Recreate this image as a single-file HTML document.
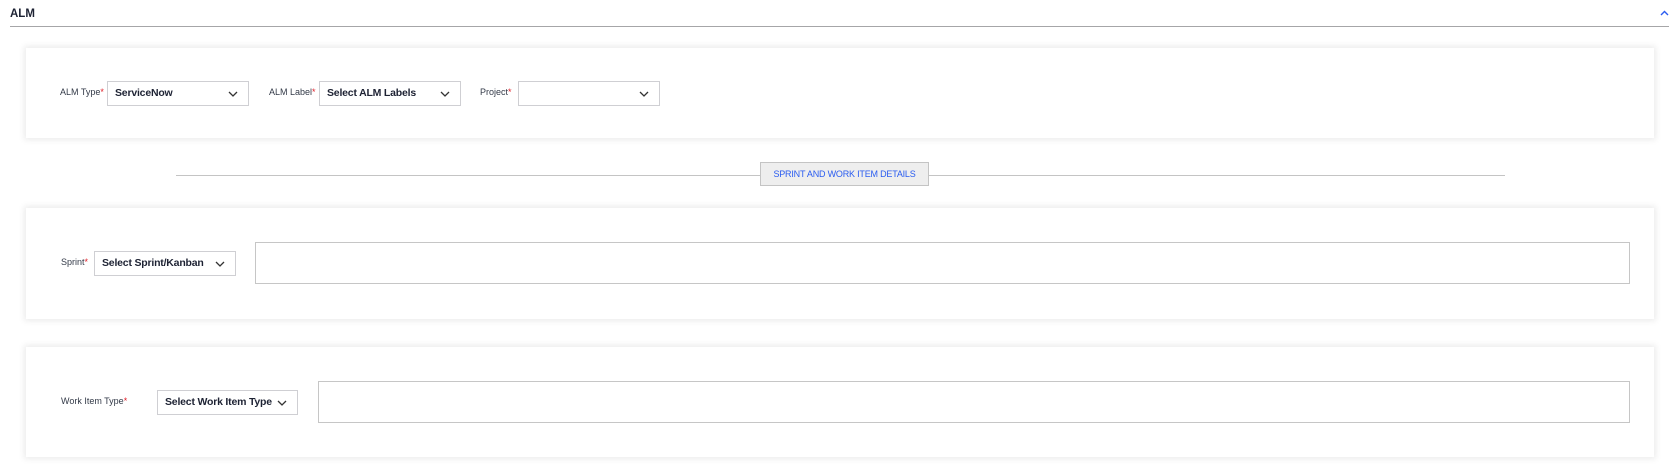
<!DOCTYPE html>
<html><head><style>
body{margin:0;width:1669px;height:465px;background:#fff;font-family:"Liberation Sans",sans-serif;position:relative;overflow:hidden;color:#1d2233}
.a{position:absolute}
.card{position:absolute;left:26px;width:1628px;background:#fff;box-shadow:0 0 6px 2px rgba(0,0,0,0.08)}
.lbl{position:absolute;font-size:9px;color:#333a48;white-space:nowrap}
.lbl b{color:#e0202a;font-weight:normal}
.sel{position:absolute;border:1px solid #cfcfd3;box-sizing:border-box;height:25px;font-size:10.5px;letter-spacing:-0.2px;font-weight:bold;line-height:23px;padding-left:7px;color:#1d2233;white-space:nowrap}
.sel svg{position:absolute;right:10px;top:9px}
.box{position:absolute;border:1px solid #c6c6c6;box-sizing:border-box}
</style></head><body>
<div class="a" style="left:10px;top:8px;font-size:11.5px;font-weight:bold">ALM</div>
<svg class="a" style="left:1660px;top:10px" width="9" height="6"><path d="M1 5L4.5 1.5L8 5" fill="none" stroke="#2b5cf0" stroke-width="1.4"/></svg>
<div class="a" style="left:10px;top:26px;width:1659px;height:1px;background:#a6a6a8"></div>

<div class="card" style="top:48px;height:90px"></div>
<div class="lbl" style="left:60px;top:87px">ALM Type<b>*</b></div>
<div class="sel" style="left:107px;top:81px;width:142px">ServiceNow<svg width="10" height="6"><path d="M1 1L5 5L9 1" fill="none" stroke="#333" stroke-width="1.3"/></svg></div>
<div class="lbl" style="left:269px;top:87px">ALM Label<b>*</b></div>
<div class="sel" style="left:319px;top:81px;width:142px">Select ALM Labels<svg width="10" height="6"><path d="M1 1L5 5L9 1" fill="none" stroke="#333" stroke-width="1.3"/></svg></div>
<div class="lbl" style="left:480px;top:87px">Project<b>*</b></div>
<div class="sel" style="left:518px;top:81px;width:142px"><svg width="10" height="6"><path d="M1 1L5 5L9 1" fill="none" stroke="#333" stroke-width="1.3"/></svg></div>

<div class="a" style="left:176px;top:175px;width:1329px;height:1px;background:#c4c4c4"></div>
<div class="a" style="left:760px;top:162px;width:169px;height:24px;box-sizing:border-box;background:#eeeeee;border:1px solid #c4c4c4;color:#2a5cf0;font-size:9px;letter-spacing:-0.2px;text-align:center;line-height:22px;white-space:nowrap">SPRINT AND WORK ITEM DETAILS</div>

<div class="card" style="top:208px;height:111px"></div>
<div class="lbl" style="left:61px;top:257px">Sprint<b>*</b></div>
<div class="sel" style="left:94px;top:251px;width:142px">Select Sprint/Kanban<svg width="10" height="6"><path d="M1 1L5 5L9 1" fill="none" stroke="#333" stroke-width="1.3"/></svg></div>
<div class="box" style="left:255px;top:242px;width:1375px;height:42px"></div>

<div class="card" style="top:347px;height:110px"></div>
<div class="lbl" style="left:61px;top:396px">Work Item Type<b>*</b></div>
<div class="sel" style="left:157px;top:390px;width:141px">Select Work Item Type<svg width="10" height="6"><path d="M1 1L5 5L9 1" fill="none" stroke="#333" stroke-width="1.3"/></svg></div>
<div class="box" style="left:318px;top:381px;width:1312px;height:42px"></div>
</body></html>
